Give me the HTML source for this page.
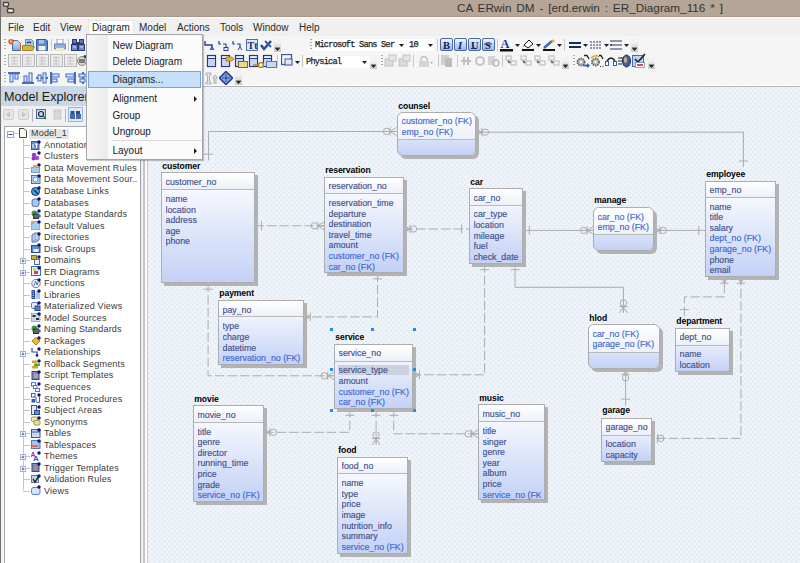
<!DOCTYPE html>
<html><head><meta charset="utf-8">
<style>
*{margin:0;padding:0;box-sizing:border-box}
html,body{width:800px;height:563px;overflow:hidden;background:#f5f5f5;font-family:"Liberation Sans",sans-serif}
.a{position:absolute}
#title{left:0;top:0;width:800px;height:17px;background:#b4a597;border-bottom:1px solid #a89888}
#title .t{left:457px;top:1px;font-size:11.75px;word-spacing:1.6px;color:#333;white-space:nowrap}
#menubar{left:0;top:17px;width:800px;height:19px;background:#f0f0f0;border-top:1px solid #fafafa}
.mi{position:absolute;top:4px;font-size:10px;color:#2a2a2a;white-space:nowrap}
#tb{left:0;top:36px;width:800px;height:50px;background:#f5f5f5}
#diag{left:148px;top:87px;width:652px;height:476px;background:#eff4fa;
 background-image:radial-gradient(circle at 1.3px 1.3px,#dde4ee 0.7px,transparent 1.1px),radial-gradient(circle at 1.3px 1.3px,#dde4ee 0.7px,transparent 1.1px);
 background-size:5.1px 5.1px,5.1px 5.1px;background-position:0 0,2.55px 2.55px}
.rel{position:absolute;left:0;top:0}
.lbl{position:absolute;font-size:8.6px;font-weight:bold;color:#000;line-height:11px;white-space:nowrap;letter-spacing:-0.1px}
.ent{position:absolute;border:1px solid #adadad;background:linear-gradient(#ffffff,#c3d1f6);box-shadow:3px 3px 0 #b3b3b3}
.key{position:absolute;left:0;top:0;right:0;background:linear-gradient(#ffffff,#edf0f8);border-bottom:1px solid #b9b9b9}
.at,.fk{position:absolute;font-size:8.8px;line-height:11px;white-space:nowrap;overflow:hidden;-webkit-text-stroke:0.15px currentColor}
.at{color:#434f8c}
.fk{color:#3b68cf}
.hl{position:absolute;background:#cdd1db}
.hd{position:absolute;width:3px;height:3px;background:#1e8cf5}
/* left panel */
#mehdr{left:1px;top:86px;width:146px;height:20px;background:#c9d7e6}
#mehdr .t{left:3px;top:4px;font-size:12.6px;color:#1a1a1a;white-space:nowrap}
#metb{left:1px;top:106px;width:146px;height:20px;background:#f0f0f0}
#tree{left:3.5px;top:126px;width:137.5px;height:445px;background:#fff;border:1px solid #a4a8b0;border-right:1px solid #a0a4ac}
.ti{position:absolute;left:44px;font-size:9px;letter-spacing:0.2px;color:#3a3a3a;white-space:nowrap;line-height:12px}
.ic{position:absolute;left:31px;width:9px;height:9px}
#split{left:140px;top:86px;width:8px;height:477px;background:linear-gradient(90deg,#a0a4ac 0,#a0a4ac 1px,#e8e8e8 1px,#e8e8e8 2px,#f5f5f5 2px,#f5f5f5 3px,#c4c4c4 3px,#c4c4c4 5px,#f0f0f0 5px,#fff 6px,#fff 7px,#c8c8c8 7px)}
#lb{left:0;top:0;width:1px;height:563px;background:#6e6e6e}
/* menu */
#dd{left:86px;top:34px;width:117px;height:126px;background:#fbfbfb;border:1px solid #a4a4a4;box-shadow:1px 1px 1px rgba(0,0,0,0.22)}
#dd .gut{left:0;top:0;width:21px;height:124px;background:linear-gradient(90deg,#f7f7f7,#ebebeb)}
.dm{position:absolute;left:25.5px;font-size:10px;color:#1a1a1a;white-space:nowrap}
.arr{position:absolute;left:107px;width:0;height:0;border-left:3px solid #222;border-top:3px solid transparent;border-bottom:3px solid transparent}
#dhl{left:1px;top:35.5px;width:113px;height:17px;background:#c6e0fa;border:1px solid #6ea6e8}
#mhl{left:88px;top:19px;width:46px;height:17px;background:#fdfdfd;border:1px solid #e6e6e6;border-bottom:none}
.tbi{position:absolute;width:11px;height:11px}
.grip{position:absolute;width:2px;height:12px;background:repeating-linear-gradient(#a8a8a8 0,#a8a8a8 1px,transparent 1px,transparent 3px)}
.ovf{position:absolute;width:7px;height:12px;background:linear-gradient(#f2f2f2 30%,#c4c4c4)}
.cb{position:absolute;background:#fff;font-family:"Liberation Mono",monospace;font-size:8.6px;letter-spacing:-0.75px;color:#1a1a1a;-webkit-text-stroke:0.25px #1a1a1a;white-space:nowrap;overflow:hidden;line-height:11px}
.sep{position:absolute;width:1px;height:12px;background:#c8c8c8}
</style></head><body>
<div id="title" class="a">
 <svg class="a" style="left:0;top:0" width="16" height="16" viewBox="0 0 16 16"><rect x="3.5" y="2.5" width="5" height="3.6" rx="0.8" fill="#f4f4f4" stroke="#444" stroke-width="1.4"/><rect x="7.5" y="8.7" width="6" height="3.8" rx="0.8" fill="#f4f4f4" stroke="#444" stroke-width="1.4"/><path d="M6,6.2 L9,8.6" stroke="#333" stroke-width="1"/></svg>
 <div class="a t">CA ERwin DM - [erd.erwin : ER_Diagram_116 * ]</div>
</div>
<div id="menubar" class="a">
 <div class="mi" style="left:8px">File</div>
 <div class="mi" style="left:33px">Edit</div>
 <div class="mi" style="left:60px">View</div>
 <div id="mhl" class="a" style="top:2px"></div>
 <div class="mi" style="left:92px">Diagram</div>
 <div class="mi" style="left:139px">Model</div>
 <div class="mi" style="left:177px">Actions</div>
 <div class="mi" style="left:220px">Tools</div>
 <div class="mi" style="left:253px">Window</div>
 <div class="mi" style="left:299px">Help</div>
</div>
<div id="tb" class="a">
<div class="grip" style="left:4px;top:3px"></div>
<svg class="a" style="left:8px;top:3px" width="13" height="12" viewBox="0 0 13 12"><defs><linearGradient id="gd" x1="0" y1="0" x2="0" y2="1"><stop offset="0" stop-color="#d8e8f8"/><stop offset="1" stop-color="#7aa8dc"/></linearGradient></defs><path d="M4.5,1.5H9.5L12.5,4.5V11.5H4.5Z" fill="url(#gd)" stroke="#4a6aa8"/><path d="M12.5,4.5V11.5" stroke="#c86040"/><path d="M0,2.5H6M3,0V5.5M1,0.5L5,4.5M5,0.5L1,4.5" stroke="#f05a20" stroke-width="1.3"/><circle cx="3" cy="2.5" r="1" fill="#ffe080"/></svg>
<svg class="a" style="left:22px;top:3px" width="13" height="12" viewBox="0 0 13 12"><path d="M3.5,0.5H9.5L11.5,2.5V8H3.5Z" fill="#a8c8f0" stroke="#6a8ac8"/><path d="M5,4Q7,2 9,4" fill="none" stroke="#222" stroke-width="1.1"/><path d="M0.5,6.5H8L12.5,8L10.5,11.5H0.5Z" fill="#d0b840" stroke="#8a7010" stroke-width="0.8"/></svg>
<svg class="a" style="left:36px;top:3px" width="12" height="12" viewBox="0 0 12 12"><path d="M0.5,0.5H10L11.5,2V11.5H0.5Z" fill="#5a88c8" stroke="#2e5a98"/><rect x="3" y="1" width="5" height="3.5" fill="#a8c4e8"/><rect x="2.5" y="7" width="7" height="4.5" fill="#f0f0ea"/></svg>
<div class="sep" style="left:51px;top:3px;height:12px"></div>
<svg class="a" style="left:54px;top:3px" width="12" height="12" viewBox="0 0 12 12"><rect x="3" y="0" width="6" height="5" fill="#fff" stroke="#6a8ec0" stroke-width="0.8"/><rect x="0.5" y="5" width="11" height="5" fill="#8fb4e0" stroke="#5a7eb0" stroke-width="0.8"/><rect x="2" y="9" width="8" height="3" fill="#e8e8d0"/></svg>
<div class="sep" style="left:68px;top:3px;height:12px"></div>
<svg class="a" style="left:71px;top:3px" width="14" height="12" viewBox="0 0 14 12"><rect x="1.5" y="0.5" width="4" height="4" fill="#5a7ab8" stroke="#2a3a78"/><rect x="8.5" y="0.5" width="4" height="4" fill="#5a7ab8" stroke="#2a3a78"/><rect x="0.5" y="5.5" width="6" height="6" fill="#6a8ac8" stroke="#2a3a78"/><rect x="7.5" y="5.5" width="6" height="6" fill="#6a8ac8" stroke="#2a3a78"/><rect x="5" y="3" width="4" height="3" fill="#2a3a78"/><path d="M2,8H5M9,8H12" stroke="#dde"/></svg>
<svg class="a" style="left:204px;top:4px" width="11" height="11" viewBox="0 0 11 11"><path d="M1,1V5H8V10" fill="none" stroke="#1f3f9f" stroke-width="1.4"/><path d="M6,10L8,7L10,10" fill="none" stroke="#1f3f9f"/></svg>
<svg class="a" style="left:218px;top:4px" width="11" height="11" viewBox="0 0 11 11"><path d="M1,1V4H3M5,4H8V7" fill="none" stroke="#1f3f9f" stroke-width="1.2"/><rect x="6" y="7.5" width="4" height="3" fill="none" stroke="#1f3f9f"/></svg>
<svg class="a" style="left:232px;top:4px" width="11" height="11" viewBox="0 0 11 11"><path d="M1,1V4H3M5,4H8V7" fill="none" stroke="#1f3f9f" stroke-width="1.2"/><path d="M6,10L8,7L10,10" fill="none" stroke="#1f3f9f"/></svg>
<svg class="a" style="left:246px;top:3px" width="12" height="12" viewBox="0 0 12 12"><rect x="0.5" y="0.5" width="11" height="11" fill="#dde8f6" stroke="#4a70b0"/><text x="1.5" y="10" font-family="Liberation Serif" font-weight="bold" font-size="10" fill="#1c2c6c">Tt</text></svg>
<svg class="a" style="left:260px;top:3px" width="12" height="12" viewBox="0 0 12 12"><path d="M1,6L4,10L11,2" fill="none" stroke="#2a4aa8" stroke-width="2.5"/><path d="M5,2L11,8" stroke="#3a5ac0" stroke-width="2"/></svg>
<div class="ovf" style="left:274px;top:2px;height:14px"></div><svg class="a" style="left:275px;top:11px" width="5" height="4"><path d="M0,0H5M0.5,1.5H4.5L2.5,3.5Z" stroke="#222" stroke-width="0.8" fill="#222"/></svg>
<div class="grip" style="left:310px;top:3px"></div>
<div class="cb" style="left:313px;top:3px;width:93px;height:12px;padding:1px 0 0 2px">Microsoft Sans Ser</div>
<svg class="a" style="left:399px;top:8px" width="5" height="3"><path d="M0,0H5L2.5,3Z" fill="#222"/></svg>
<div class="cb" style="left:407px;top:3px;width:27px;height:12px;padding:1px 0 0 2px">10</div>
<svg class="a" style="left:428px;top:8px" width="5" height="3"><path d="M0,0H5L2.5,3Z" fill="#222"/></svg>
<div class="sep" style="left:437px;top:3px;height:12px"></div>
<svg class="a" style="left:440px;top:2px" width="13" height="14" viewBox="0 0 13 14"><defs><linearGradient id="gb0" x1="0" y1="0" x2="0" y2="1"><stop offset="0" stop-color="#f4f8fc"/><stop offset="1" stop-color="#98b4e0"/></linearGradient></defs><rect x="0.5" y="0.5" width="12" height="12" rx="1.5" fill="url(#gb0)" stroke="#4a68a8"/><text x="3" y="10.5" font-family="Liberation Serif" font-weight="bold" font-size="10.5" fill="#0c1c5c">B</text></svg>
<svg class="a" style="left:454px;top:2px" width="13" height="14" viewBox="0 0 13 14"><defs><linearGradient id="gb1" x1="0" y1="0" x2="0" y2="1"><stop offset="0" stop-color="#f4f8fc"/><stop offset="1" stop-color="#98b4e0"/></linearGradient></defs><rect x="0.5" y="0.5" width="12" height="12" rx="1.5" fill="url(#gb1)" stroke="#4a68a8"/><text x="4" y="10.5" font-family="Liberation Serif" font-weight="bold" font-style="italic" font-size="10.5" fill="#0c1c5c">I</text></svg>
<svg class="a" style="left:468px;top:2px" width="13" height="14" viewBox="0 0 13 14"><defs><linearGradient id="gb2" x1="0" y1="0" x2="0" y2="1"><stop offset="0" stop-color="#f4f8fc"/><stop offset="1" stop-color="#98b4e0"/></linearGradient></defs><rect x="0.5" y="0.5" width="12" height="12" rx="1.5" fill="url(#gb2)" stroke="#4a68a8"/><text x="3" y="10.5" font-family="Liberation Serif" font-weight="bold" font-size="10.5" fill="#0c1c5c">U</text><path d="M3,10.5H9" stroke="#1c2c6c"/></svg>
<svg class="a" style="left:482px;top:2px" width="13" height="14" viewBox="0 0 13 14"><defs><linearGradient id="gb3" x1="0" y1="0" x2="0" y2="1"><stop offset="0" stop-color="#f4f8fc"/><stop offset="1" stop-color="#98b4e0"/></linearGradient></defs><rect x="0.5" y="0.5" width="12" height="12" rx="1.5" fill="url(#gb3)" stroke="#4a68a8"/><text x="3" y="10.5" font-family="Liberation Serif" font-weight="bold" font-size="10.5" fill="#0c1c5c">S</text><path d="M2,6H10" stroke="#1c2c6c"/></svg>
<div class="sep" style="left:497px;top:3px;height:12px"></div>
<svg class="a" style="left:500px;top:2px" width="14" height="14" viewBox="0 0 14 14"><text x="0.5" y="10" font-family="Liberation Serif" font-weight="bold" font-size="12.5" fill="#1c3c9c">A</text><rect x="0" y="11" width="13" height="2.5" fill="#111"/></svg>
<svg class="a" style="left:515px;top:8px" width="5" height="3"><path d="M0,0H5L2.5,3Z" fill="#222"/></svg>
<svg class="a" style="left:522px;top:3px" width="13" height="13" viewBox="0 0 13 13"><path d="M2,6L7,1L11,5L6,9Z" fill="#fff" stroke="#111"/><path d="M1,6Q0,8 2,8" fill="#3a8ad8"/><rect x="0" y="10" width="12" height="2" fill="#111"/></svg>
<svg class="a" style="left:536px;top:8px" width="5" height="3"><path d="M0,0H5L2.5,3Z" fill="#222"/></svg>
<svg class="a" style="left:543px;top:3px" width="13" height="13" viewBox="0 0 13 13"><path d="M1,9L9,2" stroke="#3a6ac8" stroke-width="2.5"/><circle cx="10" cy="2" r="1.6" fill="#e8b020"/><rect x="0" y="10" width="12" height="2" fill="#111"/></svg>
<svg class="a" style="left:557px;top:8px" width="5" height="3"><path d="M0,0H5L2.5,3Z" fill="#222"/></svg>
<div class="sep" style="left:564px;top:3px;height:12px"></div>
<svg class="a" style="left:569px;top:3px" width="13" height="12" viewBox="0 0 13 12"><rect x="0" y="3" width="12" height="2" fill="#1a2a5a"/><rect x="0" y="7" width="12" height="2" fill="#1a2a5a"/></svg>
<svg class="a" style="left:583px;top:8px" width="5" height="3"><path d="M0,0H5L2.5,3Z" fill="#222"/></svg>
<svg class="a" style="left:590px;top:3px" width="13" height="12" viewBox="0 0 13 12"><path d="M0,3H12M0,6H12M0,9H12" stroke="#2a3a6a" stroke-dasharray="2 1"/></svg>
<svg class="a" style="left:604px;top:8px" width="5" height="3"><path d="M0,0H5L2.5,3Z" fill="#222"/></svg>
<svg class="a" style="left:610px;top:3px" width="13" height="12" viewBox="0 0 13 12"><path d="M0,2H12M0,6H12M0,10H12" stroke="#2a3a6a" stroke-width="1.2"/><circle cx="1" cy="6" r="1" fill="#2a3a6a"/></svg>
<svg class="a" style="left:624px;top:8px" width="5" height="3"><path d="M0,0H5L2.5,3Z" fill="#222"/></svg>
<div class="ovf" style="left:631px;top:2px;height:14px"></div><svg class="a" style="left:632px;top:11px" width="5" height="4"><path d="M0,0H5M0.5,1.5H4.5L2.5,3.5Z" stroke="#222" stroke-width="0.8" fill="#222"/></svg>
<div class="grip" style="left:4px;top:19px"></div>
<svg class="a" style="left:8px;top:18px" width="13" height="13" viewBox="0 0 13 13"><rect x="0.5" y="0.5" width="12" height="12" fill="#ececec" stroke="#b8b8b8"/><path d="M3,4H10M3,7H10M3,10H10M6,2V11" stroke="#c4c4c4"/></svg>
<svg class="a" style="left:22px;top:18px" width="13" height="13" viewBox="0 0 13 13"><rect x="0.5" y="0.5" width="12" height="12" fill="#ececec" stroke="#b8b8b8"/><path d="M3,4H10M3,7H10M3,10H10M6,2V11" stroke="#c4c4c4"/></svg>
<svg class="a" style="left:36px;top:18px" width="13" height="13" viewBox="0 0 13 13"><rect x="0.5" y="0.5" width="12" height="12" fill="#ececec" stroke="#b8b8b8"/><path d="M3,4H10M3,7H10M3,10H10M6,2V11" stroke="#c4c4c4"/></svg>
<svg class="a" style="left:50px;top:18px" width="13" height="13" viewBox="0 0 13 13"><rect x="0.5" y="0.5" width="12" height="12" fill="#ececec" stroke="#b8b8b8"/><path d="M3,4H10M3,7H10M3,10H10M6,2V11" stroke="#c4c4c4"/></svg>
<svg class="a" style="left:64px;top:18px" width="13" height="13" viewBox="0 0 13 13"><rect x="0.5" y="0.5" width="12" height="12" fill="#ececec" stroke="#b8b8b8"/><path d="M3,4H10M3,7H10M3,10H10M6,2V11" stroke="#c4c4c4"/></svg>
<svg class="a" style="left:77px;top:19px" width="10" height="11" viewBox="0 0 10 11"><circle cx="5" cy="6" r="4.5" fill="#d8d8c8" stroke="#888"/><path d="M2,5H8M2,7H8" stroke="#222" stroke-width="1.2"/><circle cx="8" cy="1.5" r="1.5" fill="#1c3c9c"/></svg>
<svg class="a" style="left:206px;top:18px" width="14" height="14" viewBox="0 0 14 14"><rect x="1.5" y="1.5" width="8" height="11" fill="#eef2fa" stroke="#22398a" stroke-width="1.2"/><rect x="2" y="5" width="7" height="7" fill="#c8d4ec"/><path d="M1.5,4.5H9.5" stroke="#22398a"/></svg>
<svg class="a" style="left:220px;top:18px" width="14" height="14" viewBox="0 0 14 14"><rect x="1.5" y="1.5" width="8" height="11" fill="#eef2fa" stroke="#22398a" stroke-width="1.2"/><rect x="2" y="5" width="7" height="7" fill="#c8d4ec"/><path d="M1.5,4.5H9.5" stroke="#22398a"/></svg>
<svg class="a" style="left:234px;top:18px" width="14" height="14" viewBox="0 0 14 14"><rect x="1.5" y="1.5" width="8" height="11" fill="#eef2fa" stroke="#22398a" stroke-width="1.2"/><rect x="2" y="5" width="7" height="7" fill="#c8d4ec"/><path d="M1.5,4.5H9.5" stroke="#22398a"/></svg>
<svg class="a" style="left:248px;top:18px" width="14" height="14" viewBox="0 0 14 14"><rect x="1.5" y="1.5" width="8" height="11" fill="#eef2fa" stroke="#22398a" stroke-width="1.2"/><rect x="2" y="5" width="7" height="7" fill="#c8d4ec"/><path d="M1.5,4.5H9.5" stroke="#22398a"/></svg>
<svg class="a" style="left:262px;top:18px" width="14" height="14" viewBox="0 0 14 14"><rect x="1.5" y="1.5" width="8" height="11" fill="#eef2fa" stroke="#22398a" stroke-width="1.2"/><rect x="2" y="5" width="7" height="7" fill="#c8d4ec"/><path d="M1.5,4.5H9.5" stroke="#22398a"/></svg>
<svg class="a" style="left:222px;top:20px" width="12" height="6" viewBox="0 0 12 6"><path d="M4,1H10L12,3L10,5H4Z" fill="#e8b040" stroke="#8a6010" stroke-width="0.6"/></svg>
<svg class="a" style="left:238px;top:25px" width="10" height="7" viewBox="0 0 10 7"><rect x="0.5" y="0.5" width="9" height="6" fill="#e8d890" stroke="#806820"/></svg>
<svg class="a" style="left:253px;top:26px" width="11" height="6" viewBox="0 0 11 6"><circle cx="8" cy="3" r="2.5" fill="none" stroke="#c08010" stroke-width="1.4"/><path d="M0,3H6" stroke="#c08010" stroke-width="1.4"/></svg>
<svg class="a" style="left:266px;top:25px" width="11" height="7" viewBox="0 0 11 7"><rect x="0.5" y="0.5" width="10" height="6" fill="#c8d8f0" stroke="#5a7ab0"/></svg>
<div class="sep" style="left:277px;top:19px;height:12px"></div>
<svg class="a" style="left:281px;top:18px" width="12" height="13" viewBox="0 0 12 13"><rect x="0.5" y="0.5" width="10" height="10" fill="none" stroke="#3a5a9a" stroke-width="1.3"/><rect x="4" y="5" width="7" height="6" fill="#e0e8f4" stroke="#3a5a9a"/></svg>
<svg class="a" style="left:295px;top:25px" width="5" height="3"><path d="M0,0H5L2.5,3Z" fill="#222"/></svg>
<div class="sep" style="left:302px;top:19px;height:12px"></div>
<div class="cb" style="left:304px;top:20px;width:65px;height:12px;padding:1px 0 0 2px">Physical</div>
<svg class="a" style="left:362px;top:25px" width="5" height="3"><path d="M0,0H5L2.5,3Z" fill="#222"/></svg>
<div class="ovf" style="left:370px;top:22px;height:11px"></div><svg class="a" style="left:371px;top:28px" width="5" height="4"><path d="M0,0H5M0.5,1.5H4.5L2.5,3.5Z" stroke="#222" stroke-width="0.8" fill="#222"/></svg>
<div class="grip" style="left:381px;top:19px"></div>
<svg class="a" style="left:384px;top:18px" width="13" height="13" viewBox="0 0 13 13"><rect x="1" y="5" width="8" height="7" fill="#dcdcdc" stroke="#c0c0c0"/><rect x="5" y="1" width="7" height="6" fill="#e4e4e4" stroke="#c4c4c4"/></svg>
<svg class="a" style="left:398px;top:18px" width="13" height="13" viewBox="0 0 13 13"><rect x="1" y="5" width="8" height="7" fill="#dcdcdc" stroke="#c0c0c0"/><rect x="5" y="1" width="7" height="6" fill="#e4e4e4" stroke="#c4c4c4"/></svg>
<div class="sep" style="left:413px;top:19px;height:12px"></div>
<svg class="a" style="left:418px;top:19px" width="16" height="12" viewBox="0 0 16 12"><path d="M3,6V3Q6,0 9,3V6" fill="none" stroke="#bdbdbd" stroke-width="1.3"/><rect x="1" y="6" width="10" height="6" fill="#d4d4d4"/><path d="M12,7H15L13.5,9Z" fill="#aaa"/></svg>
<div class="sep" style="left:438px;top:19px;height:12px"></div>
<svg class="a" style="left:441px;top:19px" width="12" height="12" viewBox="0 0 12 12"><rect x="0" y="0" width="8" height="10" fill="#d0d0d0"/><rect x="4" y="3" width="7" height="9" fill="#bdbdbd"/></svg>
<div class="sep" style="left:457px;top:19px;height:12px"></div>
<svg class="a" style="left:460px;top:19px" width="12" height="12" viewBox="0 0 12 12"><path d="M1,6H11M4,2V10M8,2V10" stroke="#c0c0c0" stroke-width="2"/></svg>
<svg class="a" style="left:474px;top:19px" width="12" height="12" viewBox="0 0 12 12"><circle cx="6" cy="6" r="4" fill="none" stroke="#c4c4c4" stroke-width="2"/></svg>
<svg class="a" style="left:488px;top:19px" width="12" height="12" viewBox="0 0 12 12"><rect x="0" y="1" width="7" height="9" fill="#d4d4d4"/><circle cx="8" cy="8" r="3" fill="none" stroke="#bbb" stroke-width="1.4"/></svg>
<div class="sep" style="left:502px;top:19px;height:12px"></div>
<svg class="a" style="left:505px;top:19px" width="13" height="12" viewBox="0 0 13 12"><rect x="1" y="1" width="5" height="4" fill="none" stroke="#c0c0c0" stroke-width="1.2"/><rect x="6" y="6" width="5" height="4" fill="none" stroke="#c0c0c0" stroke-width="1.2"/><path d="M3,5V8H6" stroke="#c0c0c0"/></svg>
<svg class="a" style="left:520px;top:19px" width="13" height="12" viewBox="0 0 13 12"><rect x="1" y="1" width="5" height="4" fill="none" stroke="#c0c0c0" stroke-width="1.2"/><rect x="6" y="6" width="5" height="4" fill="none" stroke="#c0c0c0" stroke-width="1.2"/><path d="M3,5V8H6" stroke="#c0c0c0"/></svg>
<svg class="a" style="left:534px;top:19px" width="13" height="12" viewBox="0 0 13 12"><rect x="1" y="1" width="5" height="4" fill="none" stroke="#c0c0c0" stroke-width="1.2"/><rect x="6" y="6" width="5" height="4" fill="none" stroke="#c0c0c0" stroke-width="1.2"/><path d="M3,5V8H6" stroke="#c0c0c0"/></svg>
<svg class="a" style="left:548px;top:19px" width="13" height="12" viewBox="0 0 13 12"><rect x="1" y="1" width="5" height="4" fill="none" stroke="#c0c0c0" stroke-width="1.2"/><rect x="6" y="6" width="5" height="4" fill="none" stroke="#c0c0c0" stroke-width="1.2"/><path d="M3,5V8H6" stroke="#c0c0c0"/></svg>
<div class="ovf" style="left:562px;top:21px;height:12px"></div><svg class="a" style="left:563px;top:28px" width="5" height="4"><path d="M0,0H5M0.5,1.5H4.5L2.5,3.5Z" stroke="#222" stroke-width="0.8" fill="#222"/></svg>
<div class="grip" style="left:573px;top:19px"></div>
<svg class="a" style="left:576px;top:18px" width="15" height="14" viewBox="0 0 15 14"><circle cx="5" cy="8" r="3.6" fill="#b8b8b8" stroke="#555" stroke-width="1.6" stroke-dasharray="1.4 0.9"/><circle cx="5" cy="8" r="1.2" fill="#fff"/><path d="M8,1.5H11L13,5" fill="none" stroke="#222" stroke-width="1.3"/><path d="M7,11.5H13" stroke="#2a5ad0" stroke-width="1.8"/><path d="M11,9L14,11.5L11,14" fill="#2a5ad0"/></svg>
<svg class="a" style="left:590px;top:18px" width="15" height="14" viewBox="0 0 15 14"><circle cx="5.5" cy="8" r="3.6" fill="#b8b8b8" stroke="#555" stroke-width="1.6" stroke-dasharray="1.4 0.9"/><circle cx="5.5" cy="8" r="1.2" fill="#fff"/><path d="M1,4Q5,0 9,3" fill="none" stroke="#d8a820" stroke-width="1.6"/><path d="M9,1.5H11L13,5" fill="none" stroke="#222" stroke-width="1.3"/><path d="M10,12.5H11M12.5,12.5H13.5" stroke="#333"/></svg>
<svg class="a" style="left:605px;top:19px" width="12" height="12" viewBox="0 0 12 12"><path d="M2,6Q6,0 10,6" fill="none" stroke="#222" stroke-width="1.4"/><rect x="0.5" y="6.5" width="3" height="4" fill="#fff" stroke="#2a5ad0"/><rect x="8.5" y="6.5" width="3" height="4" fill="#fff" stroke="#2a5ad0"/></svg>
<svg class="a" style="left:618px;top:18px" width="13" height="14" viewBox="0 0 13 14"><path d="M0,4H4M0,7H4M0,10H4" stroke="#222"/><circle cx="4" cy="4" r="0.8" fill="#222"/><ellipse cx="8.5" cy="7" rx="4" ry="6" fill="#4a5aa0" stroke="#1a2a5a"/><ellipse cx="7.5" cy="6" rx="1.5" ry="3" fill="#c8b870"/></svg>
<svg class="a" style="left:632px;top:17px" width="14" height="15" viewBox="0 0 14 15"><rect x="0.5" y="2.5" width="11" height="11" fill="#b8d4f4" stroke="#4a6ab0"/><path d="M3,6L6,9L13,1" fill="none" stroke="#222" stroke-width="1.6"/><rect x="3.5" y="9.5" width="9" height="5" fill="#fff" stroke="#6a7ab0" stroke-width="0.7"/><path d="M5,12H11" stroke="#d02020" stroke-width="1.6"/></svg>
<div class="ovf" style="left:648px;top:21px;height:12px"></div><svg class="a" style="left:649px;top:28px" width="5" height="4"><path d="M0,0H5M0.5,1.5H4.5L2.5,3.5Z" stroke="#222" stroke-width="0.8" fill="#222"/></svg>
<div class="grip" style="left:4px;top:36px"></div>
<svg class="a" style="left:8px;top:36px" width="13" height="12" viewBox="0 0 13 12"><path d="M0,1H12" stroke="#1f3f9f" stroke-width="1.5"/><rect x="2" y="2" width="3" height="8" fill="#dce8f8" stroke="#3a6ac8"/><rect x="7" y="2" width="3" height="5" fill="#dce8f8" stroke="#3a6ac8"/></svg>
<svg class="a" style="left:22px;top:36px" width="13" height="12" viewBox="0 0 13 12"><path d="M0,11H12" stroke="#1f3f9f" stroke-width="1.5"/><rect x="2" y="4" width="3" height="6" fill="#dce8f8" stroke="#3a6ac8"/><rect x="7" y="1" width="3" height="9" fill="#dce8f8" stroke="#3a6ac8"/></svg>
<svg class="a" style="left:36px;top:36px" width="13" height="12" viewBox="0 0 13 12"><path d="M0,6H12" stroke="#1f3f9f" stroke-width="1.5"/><rect x="2" y="3" width="3" height="6" fill="#dce8f8" stroke="#3a6ac8"/><rect x="7" y="1" width="3" height="10" fill="#dce8f8" stroke="#3a6ac8"/></svg>
<svg class="a" style="left:50px;top:36px" width="12" height="12" viewBox="0 0 12 12"><path d="M1,0V12" stroke="#1f3f9f" stroke-width="1.5"/><rect x="2" y="2" width="7" height="3" fill="#dce8f8" stroke="#3a6ac8"/><rect x="2" y="7" width="5" height="3" fill="#dce8f8" stroke="#3a6ac8"/></svg>
<svg class="a" style="left:64px;top:36px" width="12" height="12" viewBox="0 0 12 12"><path d="M11,0V12" stroke="#1f3f9f" stroke-width="1.5"/><rect x="2" y="2" width="8" height="3" fill="#dce8f8" stroke="#3a6ac8"/><rect x="4" y="7" width="6" height="3" fill="#dce8f8" stroke="#3a6ac8"/></svg>
<svg class="a" style="left:78px;top:36px" width="9" height="12" viewBox="0 0 9 12"><path d="M5,0V12" stroke="#1f3f9f" stroke-width="1.5"/><rect x="1" y="2" width="6" height="3" fill="#dce8f8" stroke="#3a6ac8"/><rect x="2" y="7" width="5" height="3" fill="#dce8f8" stroke="#3a6ac8"/></svg>
<svg class="a" style="left:205px;top:36px" width="14" height="13" viewBox="0 0 14 13"><path d="M1,1H6V3H4.5V10H6V12H1V10H2.5V3H1Z" fill="#e8e8e8" stroke="#b0b0b0"/><path d="M9,12V6H7.5L10,3L12.5,6H11V12" fill="#e0e0e0" stroke="#b0b0b0"/></svg>
<svg class="a" style="left:219px;top:35px" width="14" height="14" viewBox="0 0 14 14"><path d="M7,0.5L13.5,7L7,13.5L0.5,7Z" fill="#8aaae0" stroke="#1f3f9f" stroke-width="1.6"/><path d="M7,3V11M3,7H11" stroke="#1f3f9f"/></svg>
<div class="ovf" style="left:235px;top:34px;height:15px"></div><svg class="a" style="left:236px;top:44px" width="5" height="4"><path d="M0,0H5M0.5,1.5H4.5L2.5,3.5Z" stroke="#222" stroke-width="0.8" fill="#222"/></svg>
</div>
<div id="tbline" class="a" style="left:148px;top:85px;width:652px;height:1px;background:#fff"></div>
<div id="tbline2" class="a" style="left:148px;top:86px;width:652px;height:1px;background:#b4b4b4"></div>
<div id="diag" class="a"></div>
<svg class="rel" width="800" height="563" viewBox="0 0 800 563"><path d="M208.5,160.6 L208.5,131.5 L396.6,131.5" fill="none" stroke="#acacac" stroke-width="1"/><path d="M204.0,154.2 L213.0,154.2" stroke="#acacac" stroke-width="1" fill="none"/><path d="M390.1,131.5 L396.6,127.5" stroke="#acacac" stroke-width="1" fill="none"/><path d="M390.1,131.5 L396.6,135.5" stroke="#acacac" stroke-width="1" fill="none"/><path d="M390.1,131.5 L396.6,131.5" stroke="#acacac" stroke-width="1" fill="none"/><path d="M390.1,127.3 L390.1,135.7" stroke="#acacac" stroke-width="1" fill="none"/><circle cx="386.6" cy="131.5" r="3.2" fill="none" stroke="#acacac" stroke-width="1"/><path d="M475.4,132.2 L743.4,132.2 L743.4,167" fill="none" stroke="#acacac" stroke-width="1"/><path d="M481.9,132.2 L475.4,128.2" stroke="#acacac" stroke-width="1" fill="none"/><path d="M481.9,132.2 L475.4,136.2" stroke="#acacac" stroke-width="1" fill="none"/><path d="M481.9,132.2 L475.4,132.2" stroke="#acacac" stroke-width="1" fill="none"/><path d="M481.9,127.99999999999999 L481.9,136.39999999999998" stroke="#acacac" stroke-width="1" fill="none"/><circle cx="485.4" cy="132.2" r="3.2" fill="none" stroke="#acacac" stroke-width="1"/><path d="M738.9,161 L747.9,161" stroke="#acacac" stroke-width="1" fill="none"/><path d="M254.5,225.8 L324.4,225.8" fill="none" stroke="#acacac" stroke-width="1" stroke-dasharray="9.5 3"/><path d="M261.5,221.3 L261.5,230.3" stroke="#acacac" stroke-width="1" fill="none"/><path d="M317.9,225.8 L324.4,221.8" stroke="#acacac" stroke-width="1" fill="none"/><path d="M317.9,225.8 L324.4,229.8" stroke="#acacac" stroke-width="1" fill="none"/><path d="M317.9,225.8 L324.4,225.8" stroke="#acacac" stroke-width="1" fill="none"/><path d="M317.9,221.60000000000002 L317.9,230.0" stroke="#acacac" stroke-width="1" fill="none"/><circle cx="314.4" cy="225.8" r="3.2" fill="none" stroke="#acacac" stroke-width="1"/><path d="M403.5,229 L469.2,229" fill="none" stroke="#acacac" stroke-width="1" stroke-dasharray="9.5 3"/><path d="M410.0,229 L403.5,225" stroke="#acacac" stroke-width="1" fill="none"/><path d="M410.0,229 L403.5,233" stroke="#acacac" stroke-width="1" fill="none"/><path d="M410.0,229 L403.5,229" stroke="#acacac" stroke-width="1" fill="none"/><path d="M410.0,224.8 L410.0,233.2" stroke="#acacac" stroke-width="1" fill="none"/><circle cx="413.5" cy="229" r="3.2" fill="none" stroke="#acacac" stroke-width="1"/><path d="M461.7,224.5 L461.7,233.5" stroke="#acacac" stroke-width="1" fill="none"/><path d="M522.3,230.4 L593.7,230.4" fill="none" stroke="#acacac" stroke-width="1"/><path d="M529.3,225.9 L529.3,234.9" stroke="#acacac" stroke-width="1" fill="none"/><path d="M587.2,230.4 L593.7,226.4" stroke="#acacac" stroke-width="1" fill="none"/><path d="M587.2,230.4 L593.7,234.4" stroke="#acacac" stroke-width="1" fill="none"/><path d="M587.2,230.4 L593.7,230.4" stroke="#acacac" stroke-width="1" fill="none"/><path d="M587.2,226.20000000000002 L587.2,234.6" stroke="#acacac" stroke-width="1" fill="none"/><circle cx="583.7" cy="230.4" r="3.2" fill="none" stroke="#acacac" stroke-width="1"/><path d="M653.3,230.4 L705.3,230.4" fill="none" stroke="#acacac" stroke-width="1"/><path d="M698.8,225.9 L698.8,234.9" stroke="#acacac" stroke-width="1" fill="none"/><path d="M659.8,230.4 L653.3,226.4" stroke="#acacac" stroke-width="1" fill="none"/><path d="M659.8,230.4 L653.3,234.4" stroke="#acacac" stroke-width="1" fill="none"/><path d="M659.8,230.4 L653.3,230.4" stroke="#acacac" stroke-width="1" fill="none"/><path d="M659.8,226.20000000000002 L659.8,234.6" stroke="#acacac" stroke-width="1" fill="none"/><circle cx="663.3" cy="230.4" r="3.2" fill="none" stroke="#acacac" stroke-width="1"/><path d="M515,263.2 L515,287.3 L623.4,287.3 L623.4,313" fill="none" stroke="#acacac" stroke-width="1"/><path d="M510.5,269.7 L519.5,269.7" stroke="#acacac" stroke-width="1" fill="none"/><path d="M623.4,306.5 L619.4,313" stroke="#acacac" stroke-width="1" fill="none"/><path d="M623.4,306.5 L627.4,313" stroke="#acacac" stroke-width="1" fill="none"/><path d="M623.4,306.5 L623.4,313" stroke="#acacac" stroke-width="1" fill="none"/><path d="M619.1999999999999,306.5 L627.6,306.5" stroke="#acacac" stroke-width="1" fill="none"/><circle cx="623.4" cy="303.0" r="3.2" fill="none" stroke="#acacac" stroke-width="1"/><path d="M625.6,368.8 L625.6,405.6" fill="none" stroke="#acacac" stroke-width="1"/><path d="M625.6,374.40000000000003 L621.6,368.8" stroke="#acacac" stroke-width="1" fill="none"/><path d="M625.6,374.40000000000003 L629.6,368.8" stroke="#acacac" stroke-width="1" fill="none"/><path d="M625.6,374.40000000000003 L625.6,368.8" stroke="#acacac" stroke-width="1" fill="none"/><path d="M621.4,374.40000000000003 L629.8000000000001,374.40000000000003" stroke="#acacac" stroke-width="1" fill="none"/><circle cx="625.6" cy="377.90000000000003" r="3.2" fill="none" stroke="#acacac" stroke-width="1"/><path d="M621.1,399.20000000000005 L630.1,399.20000000000005" stroke="#acacac" stroke-width="1" fill="none"/><path d="M684.4,316 L684.4,296.9 L724.4,296.9 L724.4,276.2" fill="none" stroke="#acacac" stroke-width="1" stroke-dasharray="9.5 3"/><path d="M679.9,309.6 L688.9,309.6" stroke="#acacac" stroke-width="1" fill="none"/><path d="M724.4,283.2 L720.4,276.2" stroke="#acacac" stroke-width="1" fill="none"/><path d="M724.4,283.2 L728.4,276.2" stroke="#acacac" stroke-width="1" fill="none"/><path d="M724.4,283.2 L724.4,276.2" stroke="#acacac" stroke-width="1" fill="none"/><path d="M720.1999999999999,283.2 L728.6,283.2" stroke="#acacac" stroke-width="1" fill="none"/><path d="M740.9,276.2 L740.9,438.4 L651.3,438.4" fill="none" stroke="#acacac" stroke-width="1" stroke-dasharray="9.5 3"/><path d="M740.9,283.2 L736.9,276.2" stroke="#acacac" stroke-width="1" fill="none"/><path d="M740.9,283.2 L744.9,276.2" stroke="#acacac" stroke-width="1" fill="none"/><path d="M740.9,283.2 L740.9,276.2" stroke="#acacac" stroke-width="1" fill="none"/><path d="M736.6999999999999,283.2 L745.1,283.2" stroke="#acacac" stroke-width="1" fill="none"/><path d="M657.5999999999999,433.9 L657.5999999999999,442.9" stroke="#acacac" stroke-width="1" fill="none"/><circle cx="660.8" cy="438.4" r="3.2" fill="none" stroke="#acacac" stroke-width="1"/><path d="M377.5,272.4 L377.5,316.9 L303.5,316.9" fill="none" stroke="#acacac" stroke-width="1" stroke-dasharray="9.5 3"/><path d="M373.0,278.79999999999995 L382.0,278.79999999999995" stroke="#acacac" stroke-width="1" fill="none"/><path d="M310.3,316.9 L303.5,312.9" stroke="#acacac" stroke-width="1" fill="none"/><path d="M310.3,316.9 L303.5,320.9" stroke="#acacac" stroke-width="1" fill="none"/><path d="M310.3,316.9 L303.5,316.9" stroke="#acacac" stroke-width="1" fill="none"/><path d="M310.3,312.7 L310.3,321.09999999999997" stroke="#acacac" stroke-width="1" fill="none"/><path d="M208.1,282.6 L208.1,375.8 L334.2,375.8" fill="none" stroke="#acacac" stroke-width="1" stroke-dasharray="9.5 3"/><path d="M203.6,289.20000000000005 L212.6,289.20000000000005" stroke="#acacac" stroke-width="1" fill="none"/><path d="M327.7,375.8 L334.2,371.8" stroke="#acacac" stroke-width="1" fill="none"/><path d="M327.7,375.8 L334.2,379.8" stroke="#acacac" stroke-width="1" fill="none"/><path d="M327.7,375.8 L334.2,375.8" stroke="#acacac" stroke-width="1" fill="none"/><path d="M327.7,371.6 L327.7,380.0" stroke="#acacac" stroke-width="1" fill="none"/><circle cx="324.2" cy="375.8" r="3.2" fill="none" stroke="#acacac" stroke-width="1"/><path d="M484.6,263.2 L484.6,374.8 L412.5,374.8" fill="none" stroke="#acacac" stroke-width="1" stroke-dasharray="9.5 3"/><path d="M480.1,269.7 L489.1,269.7" stroke="#acacac" stroke-width="1" fill="none"/><path d="M419.5,374.8 L412.5,370.8" stroke="#acacac" stroke-width="1" fill="none"/><path d="M419.5,374.8 L412.5,378.8" stroke="#acacac" stroke-width="1" fill="none"/><path d="M419.5,374.8 L412.5,374.8" stroke="#acacac" stroke-width="1" fill="none"/><path d="M419.5,370.6 L419.5,379.0" stroke="#acacac" stroke-width="1" fill="none"/><path d="M349.8,408.3 L349.8,432.3 L263.3,432.3" fill="none" stroke="#acacac" stroke-width="1" stroke-dasharray="9.5 3"/><path d="M345.3,415.3 L354.3,415.3" stroke="#acacac" stroke-width="1" fill="none"/><path d="M269.8,432.3 L263.3,428.3" stroke="#acacac" stroke-width="1" fill="none"/><path d="M269.8,432.3 L263.3,436.3" stroke="#acacac" stroke-width="1" fill="none"/><path d="M269.8,432.3 L263.3,432.3" stroke="#acacac" stroke-width="1" fill="none"/><path d="M269.8,428.1 L269.8,436.5" stroke="#acacac" stroke-width="1" fill="none"/><circle cx="273.3" cy="432.3" r="3.2" fill="none" stroke="#acacac" stroke-width="1"/><path d="M376.1,408.3 L376.1,445" fill="none" stroke="#acacac" stroke-width="1" stroke-dasharray="9.5 3"/><path d="M371.6,415.3 L380.6,415.3" stroke="#acacac" stroke-width="1" fill="none"/><path d="M376.1,438.5 L372.1,445" stroke="#acacac" stroke-width="1" fill="none"/><path d="M376.1,438.5 L380.1,445" stroke="#acacac" stroke-width="1" fill="none"/><path d="M376.1,438.5 L376.1,445" stroke="#acacac" stroke-width="1" fill="none"/><path d="M371.90000000000003,438.5 L380.3,438.5" stroke="#acacac" stroke-width="1" fill="none"/><circle cx="376.1" cy="435.0" r="3.2" fill="none" stroke="#acacac" stroke-width="1"/><path d="M393.7,408.3 L393.7,433.8 L478.2,433.8" fill="none" stroke="#acacac" stroke-width="1" stroke-dasharray="9.5 3"/><path d="M389.2,415.3 L398.2,415.3" stroke="#acacac" stroke-width="1" fill="none"/><path d="M471.7,433.8 L478.2,429.8" stroke="#acacac" stroke-width="1" fill="none"/><path d="M471.7,433.8 L478.2,437.8" stroke="#acacac" stroke-width="1" fill="none"/><path d="M471.7,433.8 L478.2,433.8" stroke="#acacac" stroke-width="1" fill="none"/><path d="M471.7,429.6 L471.7,438.0" stroke="#acacac" stroke-width="1" fill="none"/><circle cx="468.2" cy="433.8" r="3.2" fill="none" stroke="#acacac" stroke-width="1"/></svg>
<div class="lbl" style="left:398.3px;top:101.0px">counsel</div>
<div class="ent" style="left:397px;top:112px;width:79px;height:44px;border-radius:6px"><div class="key" style="height:26.80000000000001px;border-radius:6px 6px 0 0"></div></div>
<div class="fk" style="left:401.5px;top:116.4px;width:73px">customer_no (FK)</div>
<div class="fk" style="left:401.5px;top:126.7px;width:73px">emp_no (FK)</div>
<div class="lbl" style="left:162.3px;top:161.3px">customer</div>
<div class="ent" style="left:161px;top:172px;width:94px;height:111px;border-radius:0"><div class="key" style="height:16.80000000000001px;border-radius:0 0 0 0"></div></div>
<div class="at" style="left:165.5px;top:176.9px;width:88px">customer_no</div>
<div class="at" style="left:165.5px;top:193.9px;width:88px">name</div>
<div class="at" style="left:165.5px;top:204.5px;width:88px">location</div>
<div class="at" style="left:165.5px;top:215.1px;width:88px">address</div>
<div class="at" style="left:165.5px;top:225.7px;width:88px">age</div>
<div class="at" style="left:165.5px;top:236.3px;width:88px">phone</div>
<div class="lbl" style="left:325.3px;top:165.0px">reservation</div>
<div class="ent" style="left:324px;top:177px;width:80px;height:96px;border-radius:0"><div class="key" style="height:15.800000000000011px;border-radius:0 0 0 0"></div></div>
<div class="at" style="left:328.5px;top:180.7px;width:74px">reservation_no</div>
<div class="at" style="left:328.5px;top:197.9px;width:74px">reservation_time</div>
<div class="at" style="left:328.5px;top:208.5px;width:74px">departure</div>
<div class="at" style="left:328.5px;top:219.1px;width:74px">destination</div>
<div class="at" style="left:328.5px;top:229.7px;width:74px">travel_time</div>
<div class="at" style="left:328.5px;top:240.3px;width:74px">amount</div>
<div class="fk" style="left:328.5px;top:250.9px;width:74px">customer_no (FK)</div>
<div class="fk" style="left:328.5px;top:261.5px;width:74px">car_no (FK)</div>
<div class="lbl" style="left:470.3px;top:176.5px">car</div>
<div class="ent" style="left:469px;top:188px;width:54px;height:76px;border-radius:0"><div class="key" style="height:16.80000000000001px;border-radius:0 0 0 0"></div></div>
<div class="at" style="left:473.5px;top:192.9px;width:48px">car_no</div>
<div class="at" style="left:473.5px;top:209.4px;width:48px">car_type</div>
<div class="at" style="left:473.5px;top:220.0px;width:48px">location</div>
<div class="at" style="left:473.5px;top:230.6px;width:48px">mileage</div>
<div class="at" style="left:473.5px;top:241.2px;width:48px">fuel</div>
<div class="at" style="left:473.5px;top:251.8px;width:48px">check_date</div>
<div class="lbl" style="left:594.3px;top:195.0px">manage</div>
<div class="ent" style="left:593px;top:206.5px;width:61px;height:44.5px;border-radius:6px"><div class="key" style="height:27.400000000000006px;border-radius:6px 6px 0 0"></div></div>
<div class="fk" style="left:597.5px;top:211.5px;width:55px">car_no (FK)</div>
<div class="fk" style="left:597.5px;top:221.8px;width:55px">emp_no (FK)</div>
<div class="lbl" style="left:706.3px;top:168.7px">employee</div>
<div class="ent" style="left:705px;top:181px;width:71px;height:96px;border-radius:0"><div class="key" style="height:15.800000000000011px;border-radius:0 0 0 0"></div></div>
<div class="at" style="left:709.5px;top:184.8px;width:65px">emp_no</div>
<div class="at" style="left:709.5px;top:201.6px;width:65px">name</div>
<div class="at" style="left:709.5px;top:212.2px;width:65px">title</div>
<div class="at" style="left:709.5px;top:222.8px;width:65px">salary</div>
<div class="fk" style="left:709.5px;top:233.4px;width:65px">dept_no (FK)</div>
<div class="fk" style="left:709.5px;top:244.0px;width:65px">garage_no (FK)</div>
<div class="at" style="left:709.5px;top:254.6px;width:65px">phone</div>
<div class="at" style="left:709.5px;top:265.2px;width:65px">email</div>
<div class="lbl" style="left:219.3px;top:287.8px">payment</div>
<div class="ent" style="left:218px;top:300px;width:86px;height:65px;border-radius:0"><div class="key" style="height:16.30000000000001px;border-radius:0 0 0 0"></div></div>
<div class="at" style="left:222.5px;top:304.5px;width:80px">pay_no</div>
<div class="at" style="left:222.5px;top:321.4px;width:80px">type</div>
<div class="at" style="left:222.5px;top:332.0px;width:80px">charge</div>
<div class="at" style="left:222.5px;top:342.6px;width:80px">datetime</div>
<div class="fk" style="left:222.5px;top:353.2px;width:80px">reservation_no (FK)</div>
<div class="lbl" style="left:335.3px;top:332.0px">service</div>
<div class="ent" style="left:334px;top:344px;width:79px;height:65px;border-radius:0"><div class="key" style="height:17.30000000000001px;border-radius:0 0 0 0"></div></div>
<div class="hl" style="left:338px;top:365.4px;width:71px;height:10px"></div>
<div class="at" style="left:338.5px;top:348.1px;width:73px">service_no</div>
<div class="at" style="left:338.5px;top:365.4px;width:73px">service_type</div>
<div class="at" style="left:338.5px;top:376.0px;width:73px">amount</div>
<div class="fk" style="left:338.5px;top:386.6px;width:73px">customer_no (FK)</div>
<div class="fk" style="left:338.5px;top:397.2px;width:73px">car_no (FK)</div>
<div class="lbl" style="left:589.3px;top:313.3px">hlod</div>
<div class="ent" style="left:588px;top:324px;width:72px;height:45px;border-radius:6px"><div class="key" style="height:27.899999999999977px;border-radius:6px 6px 0 0"></div></div>
<div class="fk" style="left:592.5px;top:328.9px;width:66px">car_no (FK)</div>
<div class="fk" style="left:592.5px;top:339.2px;width:66px">garage_no (FK)</div>
<div class="lbl" style="left:676.3px;top:316.0px">department</div>
<div class="ent" style="left:675px;top:328px;width:55px;height:44px;border-radius:0"><div class="key" style="height:16.5px;border-radius:0 0 0 0"></div></div>
<div class="at" style="left:679.5px;top:332.3px;width:49px">dept_no</div>
<div class="at" style="left:679.5px;top:349.4px;width:49px">name</div>
<div class="at" style="left:679.5px;top:360.0px;width:49px">location</div>
<div class="lbl" style="left:194.3px;top:393.8px">movie</div>
<div class="ent" style="left:193px;top:405px;width:71px;height:97px;border-radius:0"><div class="key" style="height:16.80000000000001px;border-radius:0 0 0 0"></div></div>
<div class="at" style="left:197.5px;top:410.0px;width:65px">movie_no</div>
<div class="at" style="left:197.5px;top:426.6px;width:65px">title</div>
<div class="at" style="left:197.5px;top:437.2px;width:65px">genre</div>
<div class="at" style="left:197.5px;top:447.8px;width:65px">director</div>
<div class="at" style="left:197.5px;top:458.4px;width:65px">running_time</div>
<div class="at" style="left:197.5px;top:469.0px;width:65px">price</div>
<div class="at" style="left:197.5px;top:479.6px;width:65px">grade</div>
<div class="fk" style="left:197.5px;top:490.2px;width:65px">service_no (FK)</div>
<div class="lbl" style="left:338.3px;top:445.4px">food</div>
<div class="ent" style="left:337px;top:457px;width:71px;height:97px;border-radius:0"><div class="key" style="height:16.19999999999999px;border-radius:0 0 0 0"></div></div>
<div class="at" style="left:341.5px;top:461.0px;width:65px">food_no</div>
<div class="at" style="left:341.5px;top:478.1px;width:65px">name</div>
<div class="at" style="left:341.5px;top:488.7px;width:65px">type</div>
<div class="at" style="left:341.5px;top:499.3px;width:65px">price</div>
<div class="at" style="left:341.5px;top:509.9px;width:65px">image</div>
<div class="at" style="left:341.5px;top:520.5px;width:65px">nutrition_info</div>
<div class="at" style="left:341.5px;top:531.1px;width:65px">summary</div>
<div class="fk" style="left:341.5px;top:541.7px;width:65px">service_no (FK)</div>
<div class="lbl" style="left:479.3px;top:392.8px">music</div>
<div class="ent" style="left:478px;top:404px;width:67px;height:96px;border-radius:0"><div class="key" style="height:17.100000000000023px;border-radius:0 0 0 0"></div></div>
<div class="at" style="left:482.5px;top:409.3px;width:61px">music_no</div>
<div class="at" style="left:482.5px;top:426.0px;width:61px">title</div>
<div class="at" style="left:482.5px;top:436.6px;width:61px">singer</div>
<div class="at" style="left:482.5px;top:447.2px;width:61px">genre</div>
<div class="at" style="left:482.5px;top:457.8px;width:61px">year</div>
<div class="at" style="left:482.5px;top:468.4px;width:61px">album</div>
<div class="at" style="left:482.5px;top:479.0px;width:61px">price</div>
<div class="fk" style="left:482.5px;top:489.6px;width:58.5px">service_no (FK)</div>
<div class="lbl" style="left:602.3px;top:405.4px">garage</div>
<div class="ent" style="left:601px;top:417.5px;width:51px;height:44.5px;border-radius:0"><div class="key" style="height:17.69999999999999px;border-radius:0 0 0 0"></div></div>
<div class="at" style="left:605.5px;top:422.4px;width:45px">garage_no</div>
<div class="at" style="left:605.5px;top:439.2px;width:45px">location</div>
<div class="at" style="left:605.5px;top:449.8px;width:45px">capacity</div>
<div class="hd" style="left:329.7px;top:328.0px"></div><div class="hd" style="left:329.7px;top:368.3px"></div><div class="hd" style="left:329.7px;top:409.3px"></div><div class="hd" style="left:370.7px;top:328.0px"></div><div class="hd" style="left:370.7px;top:409.3px"></div><div class="hd" style="left:412.5px;top:328.0px"></div><div class="hd" style="left:412.5px;top:368.3px"></div><div class="hd" style="left:412.5px;top:409.3px"></div>
<div id="mehdr" class="a"><div class="a t">Model Explorer</div></div>
<div id="metb" class="a">
<svg class="a" style="left:2px;top:3px" width="11" height="11"><rect x="0.5" y="0.5" width="10" height="10" rx="1.5" fill="#e6e6e6" stroke="#cfcfcf"/><path d="M7,2.5V8.5L3,5.5Z" fill="#c4c4c4"/></svg>
<svg class="a" style="left:17px;top:3px" width="11" height="11"><rect x="0.5" y="0.5" width="10" height="10" rx="1.5" fill="#e6e6e6" stroke="#cfcfcf"/><path d="M4,2.5V8.5L8,5.5Z" fill="#c4c4c4"/></svg>
<div class="a" style="left:31px;top:3px;width:1px;height:13px;background:#b4b4b4"></div>
<svg class="a" style="left:35px;top:3px" width="11" height="11"><rect x="0.5" y="0.5" width="9" height="9" fill="#c8daf0" stroke="#4a6aa8"/><circle cx="5" cy="5" r="2.5" fill="none" stroke="#222" stroke-width="1.2"/><path d="M7,7L10,10" stroke="#2a8a2a" stroke-width="1.5"/></svg>
<svg class="a" style="left:52px;top:3px" width="9" height="11"><rect x="1" y="2" width="7" height="8" fill="#d8d8d8" stroke="#c8c8c8"/><path d="M0,1H9" stroke="#c8c8c8"/></svg>
<div class="a" style="left:64px;top:3px;width:1px;height:13px;background:#b4b4b4"></div>
<div class="a" style="left:67px;top:1px;width:15px;height:15px;background:#dde9f8;border:1px solid #90b8e8"></div>
<svg class="a" style="left:69px;top:4px" width="11" height="10"><rect x="0.5" y="1" width="4" height="3" fill="#2c4c8c"/><rect x="6" y="1" width="4" height="3" fill="#2c4c8c"/><rect x="0" y="4" width="5" height="5" fill="#4a6aa8"/><rect x="6" y="4" width="5" height="5" fill="#4a6aa8"/></svg>
</div>
<div id="tree" class="a">
<div class="a" style="left:24.5px;top:1.5px;width:40px;height:10px;background:#e4e4e4"></div>
<div class="ti" style="left:26.5px;top:0.0px">Model_1</div>
<svg class="a" style="left:2.5px;top:4px" width="7" height="7"><rect x="0.5" y="0.5" width="6" height="6" fill="#fff" stroke="#9aa8c0"/><path d="M1.5,3.5H5.5" stroke="#2a4ab0"/></svg>
<div class="a" style="left:9.5px;top:6px;width:4px;height:1px;background:#c0c0c0"></div>
<svg class="a" style="left:14.5px;top:1px" width="8" height="10"><path d="M0.5,0.5H5L7.5,3V9.5H0.5Z" fill="#fffbe8" stroke="#444"/></svg>
<div class="a" style="left:18.0px;top:12px;width:1px;height:351px;background:#c4c4c4"></div>
<div class="a" style="left:18.5px;top:18px;width:7px;height:1px;background:#c4c4c4"></div>
<svg class="a" style="left:26.5px;top:12.5px" width="10" height="11" viewBox="0 0 10 11"><rect x="0.5" y="1.5" width="7.5" height="8" fill="#6a8cc8" stroke="#3a5a9a"/><path d="M2,4V8M4,4H7M5.5,4V8" stroke="#fff" stroke-width="1"/><circle cx="8" cy="2" r="1.7" fill="#10107a"/></svg>
<div class="ti" style="left:39.5px;top:11.8px">Annotations</div>
<div class="a" style="left:18.5px;top:30px;width:7px;height:1px;background:#c4c4c4"></div>
<svg class="a" style="left:26.5px;top:24.0px" width="10" height="11" viewBox="0 0 10 11"><circle cx="3" cy="4" r="2.3" fill="#9040c0"/><circle cx="6" cy="7" r="2.3" fill="#a050d0"/><circle cx="2.5" cy="7.5" r="2" fill="#8a3ab8"/><circle cx="8" cy="2" r="1.7" fill="#10107a"/></svg>
<div class="ti" style="left:39.5px;top:23.3px">Clusters</div>
<div class="a" style="left:18.5px;top:41px;width:7px;height:1px;background:#c4c4c4"></div>
<svg class="a" style="left:26.5px;top:35.6px" width="10" height="11" viewBox="0 0 10 11"><rect x="0.5" y="4.5" width="8" height="5" fill="#a8c8ee" stroke="#7a9acc"/><rect x="2" y="2" width="4" height="3" fill="#f0a040"/><circle cx="8" cy="2" r="1.7" fill="#10107a"/></svg>
<div class="ti" style="left:39.5px;top:34.9px">Data Movement Rules</div>
<div class="a" style="left:18.5px;top:53px;width:7px;height:1px;background:#c4c4c4"></div>
<svg class="a" style="left:26.5px;top:47.1px" width="10" height="11" viewBox="0 0 10 11"><rect x="0.5" y="1.5" width="8.5" height="8" fill="#b8d4f4" stroke="#4a70c0"/><circle cx="4.5" cy="5.5" r="2.5" fill="#fff" stroke="#4a8ad8"/><circle cx="8" cy="2" r="1.7" fill="#10107a"/></svg>
<div class="ti" style="left:39.5px;top:46.4px">Data Movement Sour..</div>
<div class="a" style="left:18.5px;top:64px;width:7px;height:1px;background:#c4c4c4"></div>
<svg class="a" style="left:26.5px;top:58.6px" width="10" height="11" viewBox="0 0 10 11"><circle cx="4.5" cy="5.5" r="4" fill="#40a8e0" stroke="#1a2a6a"/><path d="M3,4L7,8" stroke="#1a1a4a" stroke-width="1.3"/><circle cx="8" cy="2" r="1.7" fill="#10107a"/></svg>
<div class="ti" style="left:39.5px;top:57.9px">Database Links</div>
<div class="a" style="left:18.5px;top:76px;width:7px;height:1px;background:#c4c4c4"></div>
<svg class="a" style="left:26.5px;top:70.2px" width="10" height="11" viewBox="0 0 10 11"><rect x="1" y="2" width="7" height="7.5" rx="2.5" fill="#a8c8ee" stroke="#4a6aa8"/><circle cx="8" cy="2" r="1.7" fill="#10107a"/></svg>
<div class="ti" style="left:39.5px;top:69.5px">Databases</div>
<div class="a" style="left:18.5px;top:87px;width:7px;height:1px;background:#c4c4c4"></div>
<svg class="a" style="left:26.5px;top:81.7px" width="10" height="11" viewBox="0 0 10 11"><circle cx="3.5" cy="4.5" r="3" fill="#3a9a3a"/><rect x="2.5" y="5" width="5" height="4.5" fill="#666" stroke="#333"/><circle cx="8" cy="7" r="1.8" fill="#2a6ab0"/><circle cx="8" cy="2" r="1.7" fill="#10107a"/></svg>
<div class="ti" style="left:39.5px;top:81.0px">Datatype Standards</div>
<div class="a" style="left:18.5px;top:99px;width:7px;height:1px;background:#c4c4c4"></div>
<svg class="a" style="left:26.5px;top:93.2px" width="10" height="11" viewBox="0 0 10 11"><rect x="0.5" y="1.5" width="8" height="8" fill="#a8cdf4" stroke="#8ab0e0"/><rect x="0.5" y="1.5" width="2.5" height="2.5" fill="#f0a030"/><circle cx="8" cy="2" r="1.7" fill="#10107a"/></svg>
<div class="ti" style="left:39.5px;top:92.5px">Default Values</div>
<div class="a" style="left:18.5px;top:110px;width:7px;height:1px;background:#c4c4c4"></div>
<svg class="a" style="left:26.5px;top:104.7px" width="10" height="11" viewBox="0 0 10 11"><path d="M1,3L4,1H8V8L5,10H1Z" fill="#c8d8ec" stroke="#4a6aa8"/><path d="M4,1V8H8M4,8L1,10" fill="none" stroke="#6a8ac8" stroke-width="0.7"/><circle cx="8" cy="2" r="1.7" fill="#10107a"/></svg>
<div class="ti" style="left:39.5px;top:104.0px">Directories</div>
<div class="a" style="left:18.5px;top:122px;width:7px;height:1px;background:#c4c4c4"></div>
<svg class="a" style="left:26.5px;top:116.3px" width="10" height="11" viewBox="0 0 10 11"><rect x="0.5" y="2.5" width="8.5" height="7" fill="#5a8ad0" stroke="#2a4a90"/><rect x="2.5" y="6" width="5" height="3" fill="#eef"/><circle cx="8" cy="2" r="1.7" fill="#10107a"/></svg>
<div class="ti" style="left:39.5px;top:115.6px">Disk Groups</div>
<div class="a" style="left:18.5px;top:133px;width:7px;height:1px;background:#c4c4c4"></div>
<svg class="a" style="left:26.5px;top:127.8px" width="10" height="11" viewBox="0 0 10 11"><rect x="0.5" y="0.5" width="5" height="4" fill="#c8b040" stroke="#806820"/><rect x="3.5" y="4.5" width="5" height="5" fill="#e8f0fc" stroke="#4a6aa8"/><circle cx="8" cy="2" r="1.7" fill="#10107a"/></svg>
<div class="ti" style="left:39.5px;top:127.1px">Domains</div>
<svg class="a" style="left:15.5px;top:130.5px" width="6" height="6"><rect x="0.5" y="0.5" width="5" height="5" fill="#fff" stroke="#a8b4c8"/><path d="M1.5,3H4.5M3,1.5V4.5" stroke="#2a4ab0" stroke-width="0.8"/></svg>
<div class="a" style="left:18.5px;top:145px;width:7px;height:1px;background:#c4c4c4"></div>
<svg class="a" style="left:26.5px;top:139.3px" width="10" height="11" viewBox="0 0 10 11"><rect x="0.5" y="0.5" width="9" height="9" fill="#e8f0fc" stroke="#3a6ac0"/><rect x="2" y="2" width="3" height="3" fill="#e8d040"/><rect x="3" y="5" width="4" height="3" fill="#d04040"/><circle cx="8" cy="2" r="1.7" fill="#10107a"/></svg>
<div class="ti" style="left:39.5px;top:138.6px">ER Diagrams</div>
<svg class="a" style="left:15.5px;top:142.5px" width="6" height="6"><rect x="0.5" y="0.5" width="5" height="5" fill="#fff" stroke="#a8b4c8"/><path d="M1.5,3H4.5M3,1.5V4.5" stroke="#2a4ab0" stroke-width="0.8"/></svg>
<div class="a" style="left:18.5px;top:156px;width:7px;height:1px;background:#c4c4c4"></div>
<svg class="a" style="left:26.5px;top:150.9px" width="10" height="11" viewBox="0 0 10 11"><circle cx="5" cy="5.5" r="4.2" fill="#f4f4f4" stroke="#777"/><path d="M3,8L4.5,3L6,7L7,4" fill="none" stroke="#3a6ac8" stroke-width="0.9"/><circle cx="8" cy="2" r="1.7" fill="#10107a"/></svg>
<div class="ti" style="left:39.5px;top:150.2px">Functions</div>
<div class="a" style="left:18.5px;top:168px;width:7px;height:1px;background:#c4c4c4"></div>
<svg class="a" style="left:26.5px;top:162.4px" width="10" height="11" viewBox="0 0 10 11"><rect x="0.5" y="1" width="3.5" height="9" fill="#2a4a8a"/><path d="M1.5,2.5H3M1.5,4.5H3M1.5,6.5H3M1.5,8.5H3" stroke="#e8c040"/><rect x="4.5" y="2" width="4.5" height="8" fill="#a8c8ee"/><circle cx="8" cy="2" r="1.7" fill="#10107a"/></svg>
<div class="ti" style="left:39.5px;top:161.7px">Libraries</div>
<div class="a" style="left:18.5px;top:179px;width:7px;height:1px;background:#c4c4c4"></div>
<svg class="a" style="left:26.5px;top:173.9px" width="10" height="11" viewBox="0 0 10 11"><rect x="0.5" y="1.5" width="6" height="6" rx="1.5" fill="#e8f0fc" stroke="#5a7ac8"/><rect x="4" y="5" width="5" height="4.5" fill="#5a7ad0" stroke="#2a4a9a"/><circle cx="8" cy="2" r="1.7" fill="#10107a"/></svg>
<div class="ti" style="left:39.5px;top:173.2px">Materialized Views</div>
<div class="a" style="left:18.5px;top:191px;width:7px;height:1px;background:#c4c4c4"></div>
<svg class="a" style="left:26.5px;top:185.4px" width="10" height="11" viewBox="0 0 10 11"><rect x="0.5" y="1.5" width="8.5" height="8" fill="#c8d8f0" stroke="#4a6ac0" stroke-dasharray="1 1"/><rect x="1.5" y="3" width="3" height="2" fill="#333"/><rect x="5" y="6" width="3" height="2" fill="#333"/><circle cx="8" cy="2" r="1.7" fill="#10107a"/></svg>
<div class="ti" style="left:39.5px;top:184.8px">Model Sources</div>
<div class="a" style="left:18.5px;top:202px;width:7px;height:1px;background:#c4c4c4"></div>
<svg class="a" style="left:26.5px;top:197.0px" width="10" height="11" viewBox="0 0 10 11"><circle cx="3.5" cy="4.5" r="3" fill="#3a9a3a"/><rect x="2.5" y="5" width="5" height="4.5" fill="#666" stroke="#333"/><circle cx="8" cy="7" r="1.8" fill="#2a6ab0"/><circle cx="8" cy="2" r="1.7" fill="#10107a"/></svg>
<div class="ti" style="left:39.5px;top:196.3px">Naming Standards</div>
<div class="a" style="left:18.5px;top:214px;width:7px;height:1px;background:#c4c4c4"></div>
<svg class="a" style="left:26.5px;top:208.5px" width="10" height="11" viewBox="0 0 10 11"><path d="M1,5L5,1.5L9,5L5,9Z" fill="#e8c030" stroke="#a88010"/><circle cx="8" cy="2" r="1.7" fill="#10107a"/></svg>
<div class="ti" style="left:39.5px;top:207.8px">Packages</div>
<div class="a" style="left:18.5px;top:226px;width:7px;height:1px;background:#c4c4c4"></div>
<svg class="a" style="left:26.5px;top:220.0px" width="10" height="11" viewBox="0 0 10 11"><path d="M1,1V5H6V8" fill="none" stroke="#2a4ab0" stroke-width="1.2"/><circle cx="6" cy="8.5" r="1.3" fill="#10107a"/><circle cx="8" cy="2" r="1.7" fill="#10107a"/></svg>
<div class="ti" style="left:39.5px;top:219.3px">Relationships</div>
<svg class="a" style="left:15.5px;top:223.5px" width="6" height="6"><rect x="0.5" y="0.5" width="5" height="5" fill="#fff" stroke="#a8b4c8"/><path d="M1.5,3H4.5M3,1.5V4.5" stroke="#2a4ab0" stroke-width="0.8"/></svg>
<div class="a" style="left:18.5px;top:237px;width:7px;height:1px;background:#c4c4c4"></div>
<svg class="a" style="left:26.5px;top:231.6px" width="10" height="11" viewBox="0 0 10 11"><rect x="1" y="1.5" width="5" height="2.5" fill="#d8a030"/><rect x="1" y="7" width="6" height="2.5" fill="#d8a030"/><rect x="3" y="4.5" width="6" height="2.5" fill="#40b040"/><circle cx="8" cy="2" r="1.7" fill="#10107a"/></svg>
<div class="ti" style="left:39.5px;top:230.9px">Rollback Segments</div>
<div class="a" style="left:18.5px;top:249px;width:7px;height:1px;background:#c4c4c4"></div>
<svg class="a" style="left:26.5px;top:243.1px" width="10" height="11" viewBox="0 0 10 11"><rect x="1" y="1.5" width="7" height="8" fill="#6a8cc8" stroke="#2a4a9a"/><rect x="3" y="4" width="4" height="4" fill="#e09080"/><circle cx="8" cy="2" r="1.7" fill="#10107a"/></svg>
<div class="ti" style="left:39.5px;top:242.4px">Script Templates</div>
<div class="a" style="left:18.5px;top:260px;width:7px;height:1px;background:#c4c4c4"></div>
<svg class="a" style="left:26.5px;top:254.6px" width="10" height="11" viewBox="0 0 10 11"><rect x="0.5" y="0.5" width="4" height="3.5" fill="#fff" stroke="#4a7ad0"/><rect x="2.5" y="3.5" width="3.5" height="3" fill="#fff" stroke="#4a7ad0"/><rect x="4.5" y="6.5" width="4" height="3" fill="#fff" stroke="#4a7ad0"/><circle cx="8" cy="2" r="1.7" fill="#10107a"/></svg>
<div class="ti" style="left:39.5px;top:253.9px">Sequences</div>
<div class="a" style="left:18.5px;top:272px;width:7px;height:1px;background:#c4c4c4"></div>
<svg class="a" style="left:26.5px;top:266.2px" width="10" height="11" viewBox="0 0 10 11"><rect x="0.5" y="0.5" width="3.5" height="3.5" fill="#fff" stroke="#3a5ab0"/><rect x="0.5" y="6" width="3.5" height="3.5" fill="#3a5ab0"/><path d="M5,4V8Q5,9.5 7,9.5H8.5V4" fill="none" stroke="#3a5ab0"/><circle cx="8" cy="2" r="1.7" fill="#10107a"/></svg>
<div class="ti" style="left:39.5px;top:265.5px">Stored Procedures</div>
<div class="a" style="left:18.5px;top:283px;width:7px;height:1px;background:#c4c4c4"></div>
<svg class="a" style="left:26.5px;top:277.7px" width="10" height="11" viewBox="0 0 10 11"><rect x="0.5" y="0.5" width="5" height="9" fill="#e0e8f4" stroke="#4a5a80"/><rect x="3.5" y="5.5" width="5" height="4" fill="#6a8ad0" stroke="#2a4a90"/><circle cx="8" cy="2" r="1.7" fill="#10107a"/></svg>
<div class="ti" style="left:39.5px;top:277.0px">Subject Areas</div>
<div class="a" style="left:18.5px;top:295px;width:7px;height:1px;background:#c4c4c4"></div>
<svg class="a" style="left:26.5px;top:289.2px" width="10" height="11" viewBox="0 0 10 11"><rect x="0.5" y="1" width="6" height="4.5" rx="1" fill="#e8e8a8" stroke="#a0a050"/><rect x="3" y="4.5" width="6" height="4.5" rx="1" fill="#e0e090" stroke="#a0a050"/><circle cx="8" cy="2" r="1.7" fill="#10107a"/></svg>
<div class="ti" style="left:39.5px;top:288.5px">Synonyms</div>
<div class="a" style="left:18.5px;top:306px;width:7px;height:1px;background:#c4c4c4"></div>
<svg class="a" style="left:26.5px;top:300.8px" width="10" height="11" viewBox="0 0 10 11"><rect x="0.5" y="1.5" width="8.5" height="8" fill="#c8daf4" stroke="#3a5aa8"/><path d="M1,4H9" stroke="#3a5aa8"/><circle cx="8" cy="2" r="1.7" fill="#10107a"/></svg>
<div class="ti" style="left:39.5px;top:300.1px">Tables</div>
<svg class="a" style="left:15.5px;top:303.5px" width="6" height="6"><rect x="0.5" y="0.5" width="5" height="5" fill="#fff" stroke="#a8b4c8"/><path d="M1.5,3H4.5M3,1.5V4.5" stroke="#2a4ab0" stroke-width="0.8"/></svg>
<div class="a" style="left:18.5px;top:318px;width:7px;height:1px;background:#c4c4c4"></div>
<svg class="a" style="left:26.5px;top:312.3px" width="10" height="11" viewBox="0 0 10 11"><rect x="0.5" y="1.5" width="8.5" height="8" fill="#a8c0ec" stroke="#5a7ac0"/><rect x="1" y="6" width="6" height="2" fill="#e07040"/><circle cx="8" cy="2" r="1.7" fill="#10107a"/></svg>
<div class="ti" style="left:39.5px;top:311.6px">Tablespaces</div>
<div class="a" style="left:18.5px;top:329px;width:7px;height:1px;background:#c4c4c4"></div>
<svg class="a" style="left:26.5px;top:323.8px" width="10" height="11" viewBox="0 0 10 11"><text x="-0.5" y="6" font-size="7" font-family="Liberation Sans" fill="#a030b0" font-weight="bold">A</text><text x="2" y="10" font-size="8" font-family="Liberation Sans" fill="#2a5ad0" font-weight="bold">A</text><circle cx="8" cy="2" r="1.7" fill="#10107a"/></svg>
<div class="ti" style="left:39.5px;top:323.1px">Themes</div>
<svg class="a" style="left:15.5px;top:326.5px" width="6" height="6"><rect x="0.5" y="0.5" width="5" height="5" fill="#fff" stroke="#a8b4c8"/><path d="M1.5,3H4.5M3,1.5V4.5" stroke="#2a4ab0" stroke-width="0.8"/></svg>
<div class="a" style="left:18.5px;top:341px;width:7px;height:1px;background:#c4c4c4"></div>
<svg class="a" style="left:26.5px;top:335.3px" width="10" height="11" viewBox="0 0 10 11"><rect x="1" y="1.5" width="7" height="8" fill="#6a8cc8" stroke="#2a4a9a"/><circle cx="4.5" cy="6" r="2" fill="#e08040"/><circle cx="8" cy="2" r="1.7" fill="#10107a"/></svg>
<div class="ti" style="left:39.5px;top:334.6px">Trigger Templates</div>
<svg class="a" style="left:15.5px;top:338.5px" width="6" height="6"><rect x="0.5" y="0.5" width="5" height="5" fill="#fff" stroke="#a8b4c8"/><path d="M1.5,3H4.5M3,1.5V4.5" stroke="#2a4ab0" stroke-width="0.8"/></svg>
<div class="a" style="left:18.5px;top:352px;width:7px;height:1px;background:#c4c4c4"></div>
<svg class="a" style="left:26.5px;top:346.9px" width="10" height="11" viewBox="0 0 10 11"><rect x="0.5" y="1.5" width="7" height="7" fill="#c0cce0" stroke="#6a7a9a"/><path d="M2,5L4,8L8,2" fill="none" stroke="#111" stroke-width="1.3"/><circle cx="8" cy="2" r="1.7" fill="#10107a"/></svg>
<div class="ti" style="left:39.5px;top:346.2px">Validation Rules</div>
<div class="a" style="left:18.5px;top:364px;width:7px;height:1px;background:#c4c4c4"></div>
<svg class="a" style="left:26.5px;top:358.4px" width="10" height="11" viewBox="0 0 10 11"><rect x="0.5" y="2.5" width="8.5" height="7" rx="2" fill="#d8e4f8" stroke="#5a7ad0"/><circle cx="8" cy="2" r="1.7" fill="#10107a"/></svg>
<div class="ti" style="left:39.5px;top:357.7px">Views</div>
</div>
<div id="split" class="a"></div>
<div id="dd" class="a">
 <div class="a gut"></div>
 <div id="dhl" class="a"></div>
 <div class="dm" style="top:5px">New Diagram</div>
 <div class="dm" style="top:21px">Delete Diagram</div>
 <div class="dm" style="top:39px">Diagrams...</div>
 <div class="dm" style="top:58px">Alignment</div>
 <div class="arr" style="top:61px"></div>
 <div class="dm" style="top:75px">Group</div>
 <div class="dm" style="top:91px">Ungroup</div>
 <div class="a" style="left:25px;top:105px;width:90px;height:1px;background:#dcdcdc"></div>
 <div class="dm" style="top:110px">Layout</div>
 <div class="arr" style="top:113px"></div>
</div>
<div id="lb" class="a"></div>
</body></html>
